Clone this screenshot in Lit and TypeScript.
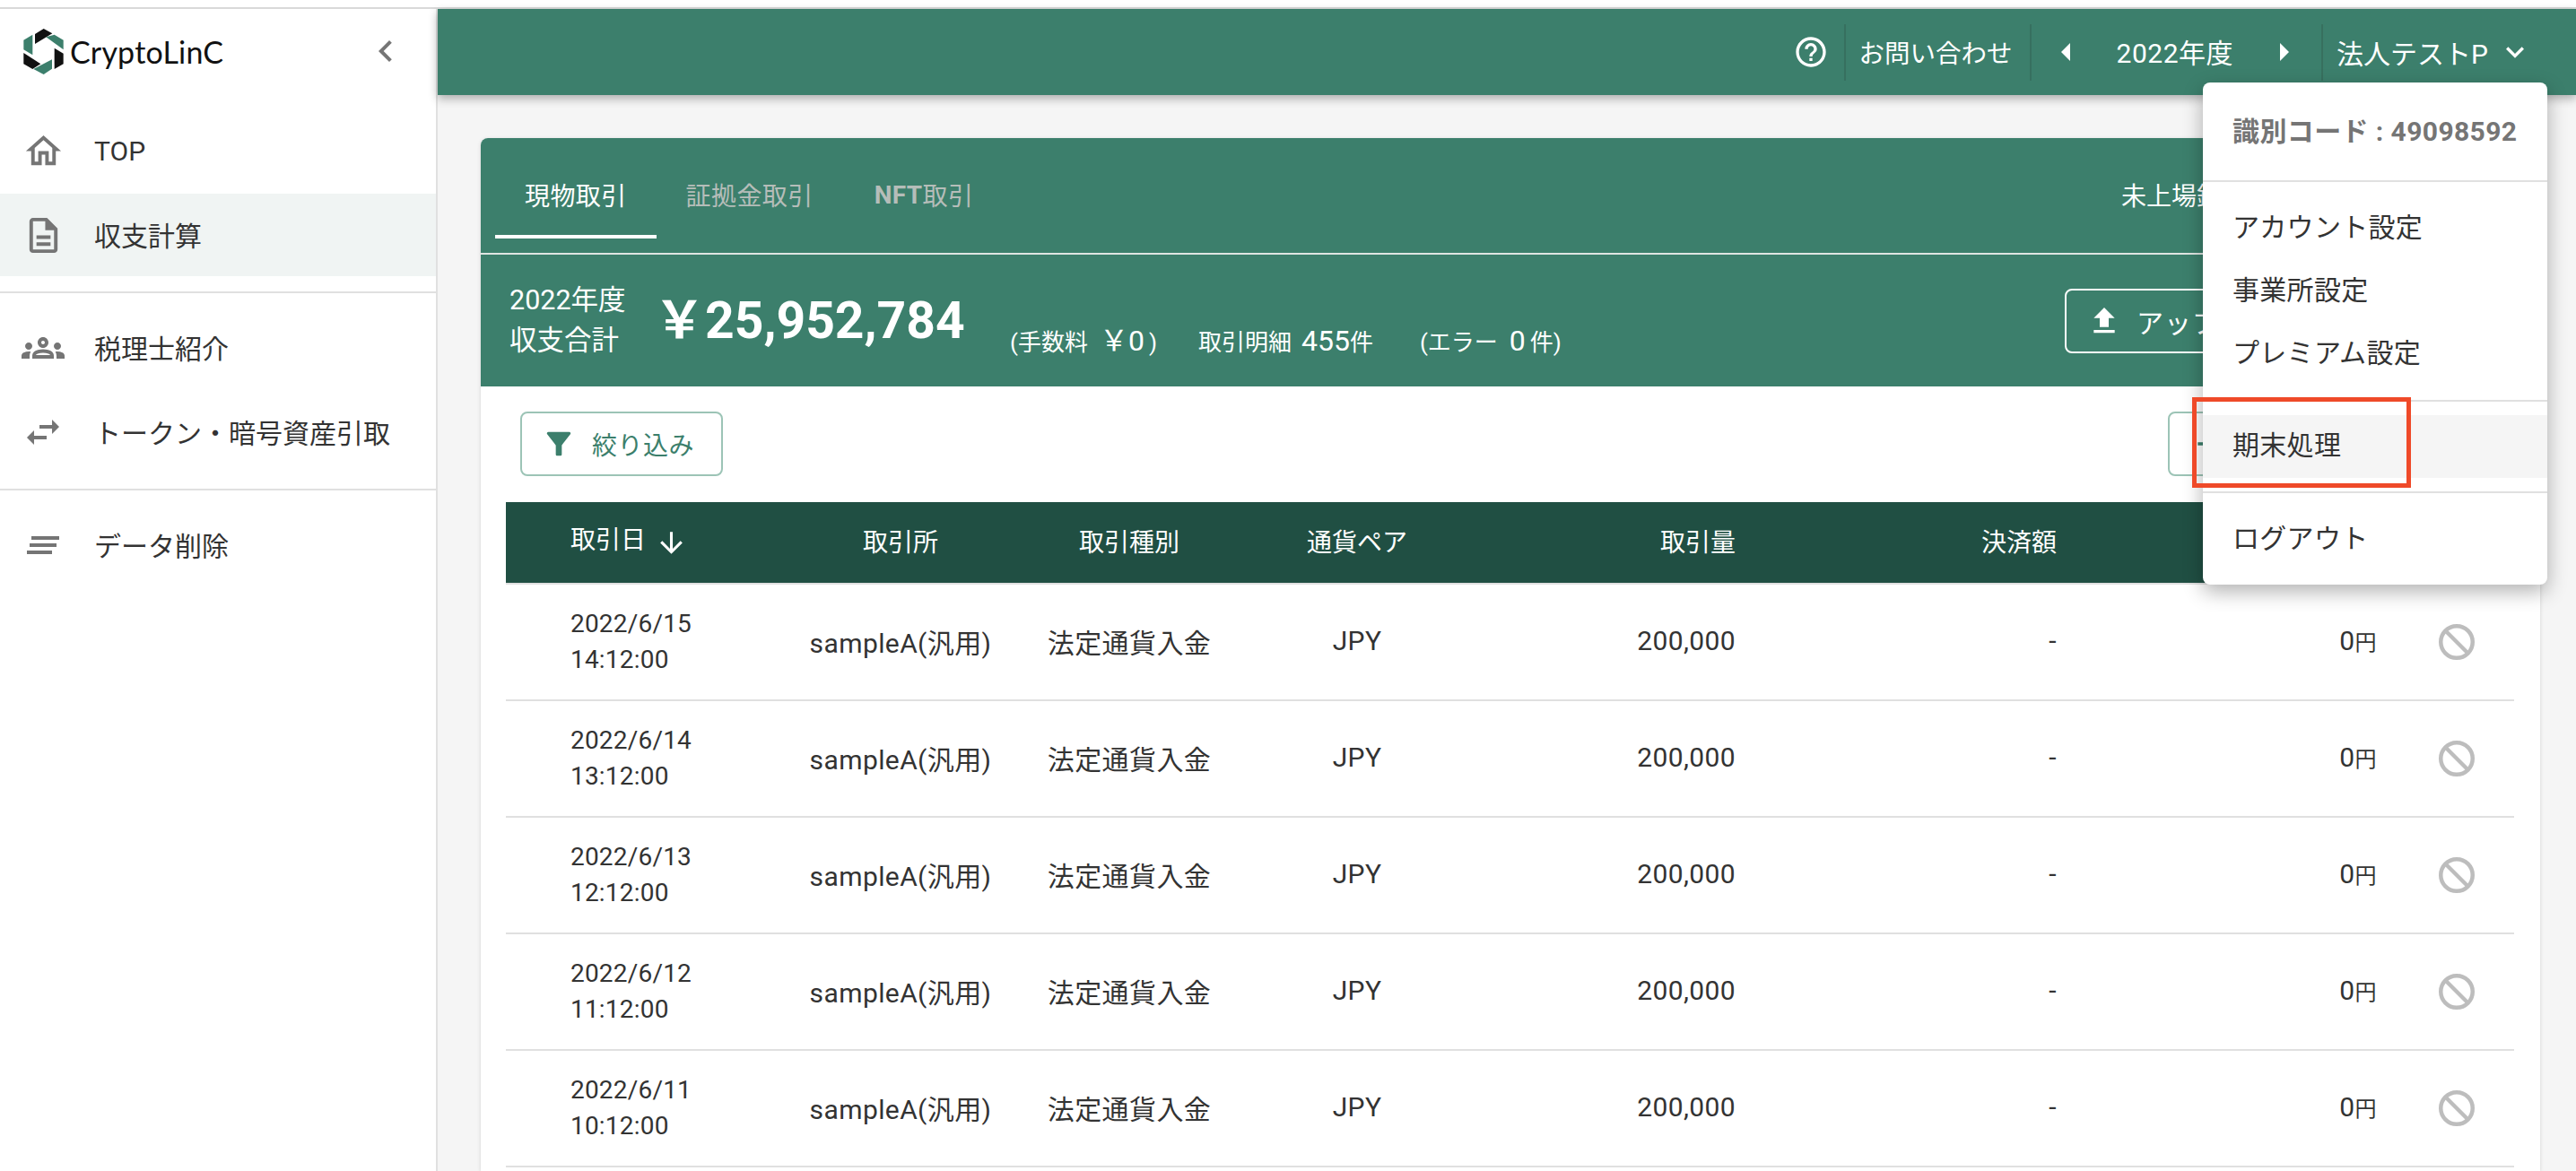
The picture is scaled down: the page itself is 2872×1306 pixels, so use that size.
import { LitElement, css, html } from 'lit'
import { customElement } from 'lit/decorators.js'

const rows = [
  ['2022/6/15', '14:12:00'],
  ['2022/6/14', '13:12:00'],
  ['2022/6/13', '12:12:00'],
  ['2022/6/12', '11:12:00'],
  ['2022/6/11', '10:12:00'],
]

const icon = (d: string, size = 48, cls = '') => html`
  <svg class=${cls} width=${size} height=${size} viewBox="0 0 24 24" fill="currentColor"><path d=${d}></path></svg>
`

const paths = {
  home: 'M12 5.69l5 4.5V18h-2v-6H9v6H7v-7.81l5-4.5M12 3L2 12h3v8h6v-6h2v6h6v-8h3L12 3z',
  doc: 'M8 16h8v2H8zm0-4h8v2H8zm6-10H6c-1.1 0-2 .9-2 2v16c0 1.1.89 2 1.99 2H18c1.1 0 2-.9 2-2V8l-6-6zm4 18H6V4h7v5h5v11z',
  groups:
    'M4 13c1.1 0 2-.9 2-2 0-1.1-.9-2-2-2s-2 .9-2 2c0 1.1.9 2 2 2zm1.13 1.1c-.37-.06-.74-.1-1.13-.1-.99 0-1.93.21-2.78.58C.48 14.9 0 15.62 0 16.43V18h4.5v-1.61c0-.83.23-1.61.63-2.29zM20 13c1.1 0 2-.9 2-2 0-1.1-.9-2-2-2s-2 .9-2 2c0 1.1.9 2 2 2zm4 3.43c0-.81-.48-1.53-1.22-1.85-.85-.37-1.79-.58-2.78-.58-.39 0-.76.04-1.13.1.4.68.63 1.46.63 2.29V18H24v-1.57zm-7.76-2.78c-1.17-.52-2.61-.9-4.24-.9-1.63 0-3.07.39-4.24.9C6.68 14.13 6 15.21 6 16.39V18h12v-1.61c0-1.18-.68-2.26-1.76-2.74zM8.07 16c.09-.23.13-.39.91-.69.97-.38 1.99-.56 3.02-.56s2.05.18 3.02.56c.77.3.81.46.91.69H8.07zM12 8c.55 0 1 .45 1 1s-.45 1-1 1-1-.45-1-1 .45-1 1-1m0-2c-1.66 0-3 1.34-3 3s1.34 3 3 3 3-1.34 3-3-1.34-3-3-3z',
  swap: 'M6.99 11L3 15l3.99 4v-3H14v-2H6.99v-3zM21 9l-3.99-4v3H10v2h7.01v3L21 9z',
  back: 'M15.41 7.41L14 6l-6 6 6 6 1.41-1.41L10.83 12z',
  help: 'M11 18h2v-2h-2v2zm1-16C6.48 2 2 6.48 2 12s4.48 10 10 10 10-4.48 10-10S17.52 2 12 2zm0 18c-4.41 0-8-3.59-8-8s3.59-8 8-8 8 3.59 8 8-3.59 8-8 8zm0-14c-2.21 0-4 1.79-4 4h2c0-1.1.9-2 2-2s2 .9 2 2c0 2-3 1.75-3 5h2c0-2.25 3-2.5 3-5 0-2.21-1.79-4-4-4z',
  more: 'M16.59 8.59L12 13.17 7.41 8.59 6 10l6 6 6-6z',
  upload: 'M5 20h14v-2H5v2zm0-10h4v6h6v-6h4l-7-7-7 7z',
  filter:
    'M4.25 5.61C6.27 8.2 10 13 10 13v6c0 .55.45 1 1 1h2c.55 0 1-.45 1-1v-6s3.72-4.8 5.74-7.39c.51-.66.04-1.61-.79-1.61H5.04c-.83 0-1.3.95-.79 1.61z',
  plus: 'M19 13h-6v6h-2v-6H5v-2h6V5h2v6h6v2z',
  down: 'M20 12l-1.41-1.41L13 16.17V4h-2v12.17l-5.58-5.59L4 12l8 8 8-8z',
}

@customElement('app-root')
export class AppRoot extends LitElement {
  static styles = css`
    :host {
      display: block;
      height: 1306px;
      overflow: hidden;
      background: #fff;
      color: #333;
      font-family: Roboto, 'Noto Sans CJK JP', sans-serif;
      font-size: 30px;
      --green: #3c7f6c;
      --dark: #204f43;
      --line: #e0e0e0;
    }
    svg {
      display: block;
      flex: none;
    }
    .app {
      position: relative;
      height: 1306px;
      display: flex;
      flex-direction: column;
    }
    .topline {
      height: 8px;
      flex: none;
      border-bottom: 2px solid #d9d9d9;
    }
    .body {
      flex: 1;
      display: flex;
      min-height: 0;
    }

    /* sidebar */
    .side {
      width: 486px;
      flex: none;
      border-right: 2px solid var(--line);
    }
    .brand {
      height: 112px;
      display: flex;
      align-items: flex-start;
      padding: 22px 32px 0 26px;
      box-sizing: border-box;
    }
    .wordmark {
      margin: 4px 0 0 7px;
      font-family: Lato, sans-serif;
      font-size: 34px;
      line-height: 44px;
      color: #111;
      letter-spacing: 0.2px;
    }
    .collapse {
      margin: 1px 0 0 auto;
      color: #757575;
    }
    .nav {
      padding-bottom: 17px;
      border-bottom: 2px solid var(--line);
      display: flex;
      flex-direction: column;
      gap: 2px;
    }
    .nav + .nav {
      padding-top: 15px;
    }
    .nav:last-child {
      border-bottom: 0;
    }
    .item {
      height: 92px;
      display: flex;
      align-items: center;
      color: #333;
    }
    .item.on {
      background: #f0f4f3;
    }
    .item span.t {
      padding-bottom: 3px;
    }
    .item .ic {
      width: 48px;
      margin-left: 24px;
      margin-right: 33px;
      color: #757575;
      display: flex;
      justify-content: center;
    }
    .lines {
      width: 36px;
      height: 20px;
    }

    /* main */
    .main {
      flex: 1;
      min-width: 0;
      background: #f5f5f5;
      display: flex;
      flex-direction: column;
    }
    .bar {
      height: 96px;
      flex: none;
      background: var(--green);
      color: #fff;
      display: flex;
      align-items: center;
      justify-content: flex-end;
      box-shadow: 0 4px 10px rgba(0, 0, 0, 0.3);
      position: relative;
      font-size: 28.5px;
    }
    .bar .cell {
      height: 63px;
      display: flex;
      align-items: center;
      border-left: 2px solid #37705f;
    }
    .bar .q {
      margin-right: 17px;
    }
    .contact {
      padding: 0 19px 2px 15px;
      box-sizing: border-box;
    }
    .year {
      padding: 0 21px 0 18px;
      font-size: 30px;
    }
    .year span {
      margin: 0 37px;
      padding-bottom: 2px;
      letter-spacing: 0.5px;
    }
    .user {
      padding: 0 48px 0 15px;
      font-size: 30px;
    }
    .user svg {
      margin-left: 10px;
    }

    .panel {
      margin: 48px 40px 0 48px;
      background: #fff;
      border-radius: 8px 8px 0 0;
      box-shadow: 0 1px 4px rgba(0, 0, 0, 0.15);
      flex: 1;
      min-height: 0;
    }
    .head {
      background: var(--green);
      color: #fff;
      border-radius: 8px 8px 0 0;
    }
    .tabs {
      height: 130px;
      box-sizing: border-box;
      padding: 18px 0 16px 16px;
      display: flex;
      border-bottom: 2px solid #dfe5e2;
      font-size: 28px;
      letter-spacing: 0.4px;
    }
    .tab {
      padding: 0 33px 4px;
      display: flex;
      align-items: center;
      height: 94px;
      box-sizing: border-box;
      color: #b5bdb9;
    }
    .tab.on {
      color: #fff;
      border-bottom: 4px solid #fff;
      padding-bottom: 0;
    }
    .tab b {
      font-weight: 700;
    }
    .tab.nft {
      margin-left: 2px;
    }
    .tabs .right {
      margin-left: auto;
      margin-right: 271px;
      height: 94px;
      display: flex;
      align-items: center;
      padding-bottom: 4px;
      box-sizing: border-box;
      letter-spacing: 0;
      white-space: nowrap;
    }
    .summary {
      height: 147px;
      display: flex;
      align-items: center;
      padding-left: 32px;
      box-sizing: border-box;
    }
    .label {
      line-height: 45px;
      font-size: 30.5px;
      width: 161px;
      padding-bottom: 2px;
      white-space: nowrap;
    }
    .amount {
      font-size: 57px;
      font-weight: 700;
      line-height: 64px;
      width: 397px;
      white-space: nowrap;
    }
    .fee {
      display: flex;
      align-items: baseline;
      font-size: 26px;
      margin-top: 38px;
      white-space: nowrap;
    }
    .fee i {
      font-style: normal;
      font-size: 32px;
    }
    .fee .m {
      margin-left: 11px;
    }
    .fee .n {
      margin-left: 46px;
    }
    .fee .e {
      margin-left: 52px;
    }
    .fee .pad {
      margin: 0 5px 0 13px;
    }
    .ghost {
      margin-left: auto;
      margin-right: 30px;
      width: 500px;
      height: 72px;
      box-sizing: border-box;
      border: 2px solid #fff;
      border-radius: 8px;
      display: flex;
      align-items: center;
      padding-left: 22px;
      gap: 16px;
      letter-spacing: 1px;
      white-space: nowrap;
    }
    .tools {
      height: 129px;
      padding: 28px 44px 0;
      box-sizing: border-box;
      display: flex;
      justify-content: space-between;
    }
    .btn {
      height: 72px;
      box-sizing: border-box;
      border: 2px solid #9cc4b6;
      border-radius: 8px;
      color: var(--green);
      display: flex;
      align-items: center;
      font-size: 28px;
      letter-spacing: 0.5px;
    }
    .btn.filter {
      width: 226px;
      padding-left: 21px;
      gap: 17px;
    }
    .btn.add {
      width: 371px;
      padding-left: 23px;
    }
    .table {
      margin: 0 29px 0 28px;
    }
    .row {
      display: grid;
      grid-template-columns: 306px 268px 242px 266px 289px 358px 357px 153px;
      align-items: center;
      height: 130px;
      box-sizing: border-box;
      border-bottom: 2px solid var(--line);
    }
    .row.th {
      height: 92px;
      background: var(--dark);
      color: #fff;
      font-size: 28px;
    }
    .row.th .c,
    .row.th .r {
      padding-bottom: 4px;
      letter-spacing: 0;
    }
    .c,
    .r {
      padding-bottom: 3px;
      letter-spacing: 0.4px;
    }
    .c {
      text-align: center;
      white-space: nowrap;
    }
    .r {
      text-align: right;
    }
    .date {
      padding-left: 72px;
      font-size: 28px;
      line-height: 40px;
      letter-spacing: 0.2px;
    }
    .th .date {
      display: flex;
      align-items: center;
      letter-spacing: 0;
      gap: 10px;
      line-height: 36px;
    }
    .th .date span {
      padding-bottom: 4px;
    }
    .yen {
      font-size: 24px;
    }
    .ban {
      padding-left: 69px;
      color: #bdbdbd;
    }

    /* overlays */
    .menu {
      position: absolute;
      left: 2456px;
      top: 92px;
      width: 384px;
      height: 560px;
      background: #fff;
      border-radius: 8px;
      box-shadow: 0 8px 22px rgba(0, 0, 0, 0.3);
      color: #333;
      letter-spacing: 0.3px;
    }
    .menu .sec {
      border-bottom: 2px solid var(--line);
    }
    .menu .sec:last-child {
      border-bottom: 0;
    }
    .mi {
      height: 70px;
      display: flex;
      align-items: center;
      padding: 0 0 5px 33px;
      box-sizing: border-box;
    }
    .mi.code {
      height: 109px;
      font-weight: 700;
      color: #757575;
      letter-spacing: 0.4px;
    }
    .s2 {
      padding: 15px 0 18px;
    }
    .s3 {
      padding: 15px 0 15px;
    }
    .s4 {
      padding: 15px 0;
    }
    .mi.hover {
      background: #f5f5f5;
      padding-bottom: 8px;
    }
    .mark {
      position: absolute;
      left: 2444px;
      top: 443px;
      width: 244px;
      height: 101px;
      box-sizing: border-box;
      border: 5px solid #ef4a29;
    }
  `

  render() {
    return html`
      <div class="app">
        <div class="topline"></div>
        <div class="body">
          <aside class="side">
            <div class="brand">
              <svg width="45" height="51" viewBox="80 37 133 153">
                <path fill="#111" d="M118 55 147 37 176 53 118 88z" />
                <path fill="#3c7f6c" d="M155 65 183 57 213 75 213 107z" />
                <path fill="#111" d="M183 102 213 120 213 155 183 172z" />
                <path fill="#3c7f6c" d="M113 172 175 140 175 171 147 190z" />
                <path fill="#111" d="M80 118 137 155 110 172 80 155z" />
                <path fill="#3c7f6c" d="M80 75 110 57 110 125 80 107z" />
              </svg>
              <span class="wordmark">CryptoLinC</span>
              ${icon(paths.back, 48, 'collapse')}
            </div>
            <div class="nav">
              <div class="item"><span class="ic">${icon(paths.home, 47)}</span>TOP</div>
              <div class="item on"><span class="ic">${icon(paths.doc, 47)}</span><span class="t">収支計算</span></div>
            </div>
            <div class="nav">
              <div class="item"><span class="ic">${icon(paths.groups)}</span><span class="t">税理士紹介</span></div>
              <div class="item"><span class="ic">${icon(paths.swap)}</span><span class="t">トークン・暗号資産引取</span></div>
            </div>
            <div class="nav">
              <div class="item">
                <span class="ic">
                  <svg class="lines" viewBox="0 0 36 20" fill="currentColor">
                    <rect x="5" y="0" width="31" height="4"></rect>
                    <rect x="3" y="8" width="30" height="4"></rect>
                    <rect x="0" y="16" width="28" height="4"></rect>
                  </svg>
                </span>
                <span class="t">データ削除</span>
              </div>
            </div>
          </aside>
          <main class="main">
            <header class="bar">
              ${icon(paths.help, 40, 'q')}
              <div class="cell contact">お問い合わせ</div>
              <div class="cell year">
                <svg width="40" height="40" viewBox="0 0 40 40" fill="currentColor"><path d="M25 10 15 20l10 10z"></path></svg>
                <span>2022年度</span>
                <svg width="40" height="40" viewBox="0 0 40 40" fill="currentColor"><path d="M15 10l10 10-10 10z"></path></svg>
              </div>
              <div class="cell user">法人テストP ${icon(paths.more, 40)}</div>
            </header>
            <section class="panel">
              <div class="head">
                <div class="tabs">
                  <div class="tab on">現物取引</div>
                  <div class="tab">証拠金取引</div>
                  <div class="tab nft"><b>NFT</b>取引</div>
                  <div class="right">未上場銘柄取引</div>
                </div>
                <div class="summary">
                  <div class="label">2022年度<br />収支合計</div>
                  <div class="amount">￥25,952,784</div>
                  <div class="fee">
                    <span>(手数料</span><i class="pad">￥0</i><span>)</span>
                    <span class="n">取引明細</span><i class="m">455</i><span>件</span>
                    <span class="e">(エラー</span><i class="pad">0</i><span>件)</span>
                  </div>
                  <div class="ghost">${icon(paths.upload, 40)}アップロード</div>
                </div>
              </div>
              <div class="tools">
                <div class="btn filter">${icon(paths.filter, 40)}絞り込み</div>
                <div class="btn add">${icon(paths.plus, 40)}</div>
              </div>
              <div class="table">
                <div class="row th">
                  <div class="date"><span>取引日</span> ${icon(paths.down, 37)}</div>
                  <div class="c">取引所</div>
                  <div class="c">取引種別</div>
                  <div class="c">通貨ペア</div>
                  <div class="r">取引量</div>
                  <div class="r">決済額</div>
                  <div></div>
                  <div></div>
                </div>
                ${rows.map(
                  ([day, time]) => html`
                    <div class="row">
                      <div class="date">${day}<br />${time}</div>
                      <div class="c">sampleA(汎用)</div>
                      <div class="c">法定通貨入金</div>
                      <div class="c">JPY</div>
                      <div class="r">200,000</div>
                      <div class="r">-</div>
                      <div class="r">0<span class="yen">円</span></div>
                      <div class="ban">
                        <svg width="40" height="40" viewBox="0 0 40 40" fill="none" stroke="currentColor" stroke-width="4.5">
                          <circle cx="20" cy="20" r="17.75"></circle>
                          <path d="M7.5 7.5 32.5 32.5"></path>
                        </svg>
                      </div>
                    </div>
                  `,
                )}
              </div>
            </section>
          </main>
        </div>
        <nav class="menu">
          <div class="sec"><div class="mi code">識別コード : 49098592</div></div>
          <div class="sec s2">
            <div class="mi">アカウント設定</div>
            <div class="mi">事業所設定</div>
            <div class="mi">プレミアム設定</div>
          </div>
          <div class="sec s3"><div class="mi hover">期末処理</div></div>
          <div class="sec s4"><div class="mi">ログアウト</div></div>
        </nav>
        <div class="mark"></div>
      </div>
    `
  }
}
